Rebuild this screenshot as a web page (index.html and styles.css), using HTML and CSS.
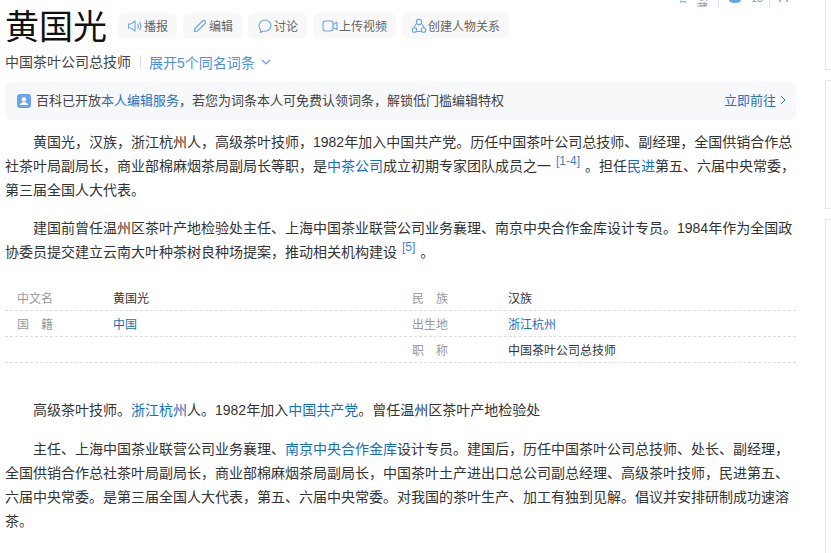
FILE: index.html
```html
<!DOCTYPE html>
<html lang="zh-CN">
<head>
    <meta charset="UTF-8">
    <title>黄国光</title>
    <link rel="stylesheet" href="styles.css">
</head>
<body>
    <div class="page">
        <div class="main">
            <div class="top-stats">
                <span class="stat stat-fav"><svg width="9" height="3" viewBox="0 0 9 3"><path d="M1 0v3l3.500-2 3.500 2V0" fill="none" stroke="#6aa4e8" stroke-width="1.500"/></svg><i class="stat-text stat-text-cn">收藏</i></span>
                <span class="stat stat-like"><svg width="12" height="3" viewBox="0 0 12 3"><path d="M0 0c0 2 2 3 6 3s6-1 6-3z" fill="#6aa4e8"/></svg><i class="stat-text">13</i></span>
                <span class="stat stat-share"><svg width="9" height="3" viewBox="0 0 9 3"><path d="M1 0v2M8 0v2" stroke="#6aa4e8" stroke-width="1.500"/></svg><i class="stat-text">3</i></span>
            </div>
            <div class="title-row">
                <h1>黄国光</h1>
                <div class="actions">
                    <a class="action"><svg width="16" height="16" viewBox="0 0 16 16" fill="none" stroke="#6aa4e8" stroke-width="1.100"><path d="M1.500 6v4h2.500l4 3V3L4 6z"/><path d="M10.500 5.500c1 1.500 1 3.500 0 5M12.500 4c1.800 2.500 1.800 5.500 0 8"/></svg>播报</a>
                    <a class="action"><svg width="16" height="16" viewBox="0 0 16 16" fill="none" stroke="#6aa4e8" stroke-width="1.100"><path d="M3 10.500 10.500 3a1.400 1.400 0 0 1 2.500 2.500L5.500 13l-3 .5z"/></svg>编辑</a>
                    <a class="action"><svg width="16" height="16" viewBox="0 0 16 16" fill="none" stroke="#6aa4e8" stroke-width="1.100"><path d="M8 2a6 5.600 0 0 1 0 11.200H5.500L3.500 14.500V11.500A5.800 5.800 0 0 1 8 2z"/></svg>讨论</a>
                    <a class="action"><svg width="16" height="16" viewBox="0 0 16 16" fill="none" stroke="#6aa4e8" stroke-width="1.100"><rect x="1" y="3" width="10" height="10" rx="2.500"/><path d="M11 6.500 15 4.500v7l-4-2"/></svg>上传视频</a>
                    <a class="action"><svg width="16" height="16" viewBox="0 0 16 16" fill="none" stroke="#6aa4e8" stroke-width="1.100"><circle cx="8" cy="4" r="2.600"/><circle cx="3.500" cy="12" r="2.300"/><circle cx="12.500" cy="12" r="2.300"/><path d="M5.500 5.500 3 9.500M10.500 5.500l2.500 4M6 13.500h4"/></svg>创建人物关系</a>
                </div>
            </div>
            <div class="desc-row">
                <span class="desc">中国茶叶公司总技师</span>
                <a class="expand">展开5个同名词条<svg width="10" height="6" viewBox="0 0 10 6" fill="none" stroke="#5b9be6" stroke-width="1.100"><path d="M1 1l4 4 4-4"/></svg></a>
            </div>

            <div class="notice">
                <span class="notice-icon"><svg width="14" height="14" viewBox="0 0 14 14"><rect width="14" height="14" rx="3" fill="#6aa4f0"/><circle cx="7" cy="5.300" r="2.200" fill="#fff"/><path d="M3 11c.5-2.300 2-3 4-3s3.500.7 4 3z" fill="#fff"/></svg></span>
                <span class="notice-text">百科已开放<a class="blue">本人编辑服务</a>，若您为词条本人可免费认领词条，解锁低门槛编辑特权</span>
                <a class="notice-go">立即前往<svg width="6" height="10" viewBox="0 0 6 10" fill="none" stroke="#2e6fc0" stroke-width="1"><path d="M1 1l4 4-4 4"/></svg></a>
            </div>

            <div class="summary">
                <p class="para">黄国光，汉族，浙江杭州人，高级茶叶技师，1982年加入中国共产党。历任中国茶叶公司总技师、副经理，全国供销合作总社茶叶局副局长，商业部棉麻烟茶局副局长等职，是<a class="link">中茶公司</a>成立初期专家团队成员之一<sup class="ref">[1-4]</sup>。担任<a class="link">民进</a>第五、六届中央常委，第三届全国人大代表。</p>
                <p class="para">建国前曾任温州区茶叶产地检验处主任、上海中国茶业联营公司业务襄理、南京中央合作金库设计专员。1984年作为全国政协委员提交建立云南大叶种茶树良种场提案，推动相关机构建设<sup class="ref">[5]</sup>。</p>
            </div>

            <div class="info">
                <div class="info-row"><span class="info-name">中文名</span><span class="info-val">黄国光</span><span class="info-name">民　族</span><span class="info-val">汉族</span></div>
                <div class="info-row"><span class="info-name">国　籍</span><span class="info-val"><a class="link">中国</a></span><span class="info-name">出生地</span><span class="info-val"><a class="link">浙江杭州</a></span></div>
                <div class="info-row"><span class="info-name"></span><span class="info-val"></span><span class="info-name">职　称</span><span class="info-val">中国茶叶公司总技师</span></div>
            </div>

            <div class="body-text">
                <p class="para">高级茶叶技师。<a class="link">浙江杭州</a>人。1982年加入<a class="link">中国共产党</a>。曾任温州区茶叶产地检验处</p>
                <p class="para">主任、上海中国茶业联营公司业务襄理、<a class="link">南京中央合作金库</a>设计专员。建国后，历任中国茶叶公司总技师、处长、副经理，全国供销合作总社茶叶局副局长，商业部棉麻烟茶局副局长，中国茶叶土产进出口总公司副总经理、高级茶叶技师，民进第五、六届中央常委。是第三届全国人大代表，第五、六届中央常委。对我国的茶叶生产、加工有独到见解。倡议并安排研制成功速溶茶。</p>
            </div>
        </div>

        <div class="side">
            <div class="side-box side-box-one"></div>
            <div class="side-box side-box-two"></div>
            <div class="side-box side-box-three"></div>
        </div>
    </div>
</body>
</html>
```

FILE: styles.css
```css
body {
    margin: 0;
    height: 553px;
    overflow: hidden;
    background-color: #fff;
    color: #333;
    font-family: "Liberation Sans", Arial, "Noto Sans CJK SC", sans-serif;
}
a {
    cursor: pointer;
}
.page {
    display: flex;
    height: 553px;
    overflow: hidden;
}
.main {
    flex: none;
    width: 791px;
    padding-left: 5px;
}

/* stats row, mostly scrolled off the top */
.top-stats {
    display: flex;
    height: 7px;
    margin-left: 675px;
    overflow: hidden;
    font-size: 11px;
    color: #999;
}
.stat {
    display: flex;
    height: 7px;
}
.stat-text {
    font-style: normal;
    line-height: 12px;
    margin-top: -8px;
}
.stat-text-cn {
    margin-top: -10px;
}
.stat-fav {
    gap: 11px;
    padding-right: 7px;
}
.stat-like {
    gap: 10px;
    padding: 0 6px 0 10px;
    border-left: 1px solid #ddd;
}
.stat-share {
    gap: 12px;
    padding-left: 9px;
    border-left: 1px solid #ddd;
}

.title-row {
    display: flex;
    align-items: center;
    height: 40px;
}
h1 {
    margin: 0;
    font-size: 34px;
    font-weight: 400;
    color: #111;
    line-height: 40px;
}
.actions {
    display: flex;
    gap: 6px;
    margin: -3px 0 0 11px;
}
.action {
    display: flex;
    align-items: center;
    gap: 1px;
    height: 26px;
    padding: 0 9px;
    border-radius: 6px;
    background-color: #f8f8f8;
    color: #666;
    font-size: 12px;
}
.desc-row {
    display: flex;
    align-items: center;
    height: 20px;
    margin-top: 5px;
    font-size: 14px;
}
.desc {
    color: #444;
    padding-right: 9px;
    border-right: 1px solid #ddd;
    line-height: 14px;
}
.expand {
    display: flex;
    align-items: center;
    gap: 6px;
    margin-left: 8px;
    color: #4d90de;
}
.notice {
    display: flex;
    align-items: center;
    height: 35px;
    margin-top: 10px;
    padding: 0 10px 3px 12px;
    border-radius: 6px;
    background-color: #f7f8fa;
    font-size: 13px;
    color: #444;
}
.notice-icon {
    display: flex;
    margin: 3px 5px 0 0;
}
.notice-text {
    flex: 1;
}
.blue {
    color: #2e6fc0;
}
.notice-go {
    display: flex;
    align-items: center;
    gap: 4px;
    color: #2e6fc0;
}
.summary {
    margin-top: 10px;
}
.para {
    margin: 0 0 14px;
    font-size: 14px;
    line-height: 24px;
    text-indent: 2em;
    color: #333;
}
.link {
    color: #136ec2;
}
.ref {
    font-size: 12px;
    line-height: 0;
    color: #3f7fc8;
    margin: 0 5px;
}
.info {
    margin-top: 21px;
}
.info-row {
    display: grid;
    grid-template-columns: 108px 299px 96px 1fr;
    height: 23px;
    padding-top: 2px;
    line-height: 25px;
    border-bottom: 1px dashed #ddd;
    font-size: 12px;
    color: #333;
}
.info-name {
    padding-left: 12px;
    color: #999;
}
.info-name:nth-child(3) {
    padding-left: 0;
}
.body-text {
    margin-top: 35px;
}
.body-text .para {
    margin-bottom: 15px;
}

/* right rail, only its edge is in view */
.side {
    flex: none;
    display: flex;
    flex-direction: column;
    gap: 10px;
    margin: -2px 0 0 29px;
}
.side-box {
    flex: none;
    width: 20px;
    border: 1px solid #e8e8e8;
}
.side-box-one {
    height: 70px;
}
.side-box-two {
    height: 127px;
}
.side-box-three {
    height: 400px;
}
```
